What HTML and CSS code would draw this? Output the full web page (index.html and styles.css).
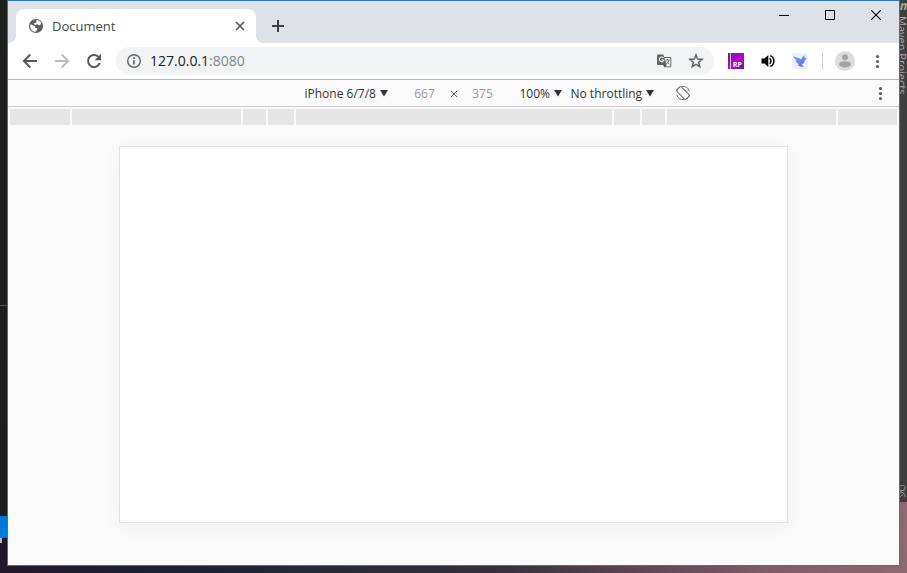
FILE: index.html
```html
<!DOCTYPE html>
<html lang="en">
<head>
<meta charset="utf-8">
<title>Document</title>
<link rel="stylesheet" href="styles.css">
</head>
<body>
<div class="desktop">
  <div class="edge-left"><i class="edge-rule"></i><i class="edge-accent"></i><i class="edge-chip"></i></div>
  <main class="window">
    <header class="tabstrip">
      <div class="tab">
        <svg class="icon16" viewBox="0 0 16 16"><circle cx="8" cy="8" r="7.1" fill="#5b5e62"/><path d="M2.500 6.200 7 8.200v1.500l2 .5.2 1-1.500 2.600C4.400 14 2 11.300 2.100 8zM8.300 1.900c2.200-.1 4.100 1.100 5.100 3.200L12 7.300l-1.800-.2-.8-1.200-2.200 1.300L5.500 5.400l2.900-.9z" fill="#fff"/></svg>
        <span class="tab-title">Document</span>
        <button class="plain tab-close" aria-label="Close tab"><svg width="10" height="10" viewBox="0 0 10 10"><path d="m1 1 8 8M9 1 1 9" stroke="#55585c" stroke-width="1.700"/></svg></button>
      </div>
      <button class="plain new-tab" aria-label="New tab"><svg width="14" height="14" viewBox="0 0 14 14"><path d="M7 1v12M1 7h12" stroke="#3c4043" stroke-width="2"/></svg></button>
      <div class="controls">
        <button class="plain" aria-label="Minimize"><svg width="10" height="10" viewBox="0 0 10 10"><path d="M0 5.500h10" stroke="#000"/></svg></button>
        <button class="plain" aria-label="Maximize"><svg width="10" height="10" viewBox="0 0 10 10"><path d="M.5.5h9v9h-9z" fill="none" stroke="#000"/></svg></button>
        <button class="plain" aria-label="Close"><svg width="10" height="10" viewBox="0 0 10 10"><path d="m0 0 10 10M10 0 0 10" stroke="#000" stroke-width="1.100"/></svg></button>
      </div>
    </header>

    <nav class="toolbar">
      <button class="plain nav" aria-label="Back"><svg class="icon16" viewBox="0 0 16 16"><path d="M15 8H2M8.300 1.500 1.800 8l6.500 6.500" fill="none" stroke="#55585c" stroke-width="1.900"/></svg></button>
      <button class="plain nav" aria-label="Forward"><svg class="icon16" viewBox="0 0 16 16"><path d="M1 8h13M7.700 1.500 14.200 8l-6.500 6.500" fill="none" stroke="#b9bbbe" stroke-width="1.900"/></svg></button>
      <button class="plain nav" aria-label="Reload"><svg class="icon16" viewBox="0 0 16 16"><path d="M13.700 10A6 6 0 1 1 12.300 3.800" fill="none" stroke="#55585c" stroke-width="2"/><path d="M15 .8v6.400H8.600z" fill="#55585c"/></svg></button>
      <div class="omnibox">
        <svg class="icon16" viewBox="0 0 16 16"><circle cx="8" cy="8" r="6.300" fill="none" stroke="#5f6368" stroke-width="1.400"/><path d="M8 7.200v4.300M8 4.200v1.700" stroke="#5f6368" stroke-width="1.700"/></svg>
        <span class="url">127.0.0.1<span class="port">:8080</span></span>
        <button class="plain" aria-label="Translate"><svg class="icon16" viewBox="0 0 16 16"><path d="M6.500 4.500h8.300v9.300H8.500" fill="#f7f7f7" stroke="#686b6f"/><path d="M2 1.500h5.300L10.800 12H2Q1 12 1 11V2.500q0-1 1-1z" fill="#606367"/><path d="M7 12h3.800L8.500 14.200z" fill="#505356"/><path d="M7.500 4.900A2.300 2.300 0 1 0 7.900 7H5.600" fill="none" stroke="#f1f3f4" stroke-width="1.100"/><path d="M9.500 7h4.300M11.600 6v1M13 7q-.5 2.500-2.600 4M10.800 8.300q1 2 2.700 3" fill="none" stroke="#686b6f" stroke-width=".9"/></svg></button>
        <button class="plain" aria-label="Bookmark"><svg class="icon16" viewBox="0 0 16 16"><path d="m8 2 1.700 4.100 4.400.3-3.400 2.900 1.100 4.300L8 11.300l-3.800 2.300 1.100-4.300-3.400-2.900 4.400-.3z" fill="none" stroke="#5f6368" stroke-width="1.500"/></svg></button>
      </div>
      <div class="extensions">
        <button class="plain" aria-label="RP"><svg class="icon16" viewBox="0 0 16 16"><defs><linearGradient id="rp" x2="1" y2="1"><stop stop-color="#6c0f94"/><stop offset=".5" stop-color="#b40bc9"/><stop offset="1" stop-color="#77108f"/></linearGradient></defs><path d="M0 0h2.300v16H0zM3 0h13v16H3z" fill="url(#rp)"/><text x="4.800" y="14" class="rp-text">RP</text></svg></button>
        <button class="plain" aria-label="Volume"><svg class="icon16" viewBox="0 0 16 16"><path d="M1.500 5.600h3L8.300 2v12L4.500 10.400h-3z" fill="#000"/><path d="M9.700 5.200q2.400 2.800 0 5.600M10.300 2.600c4.700 1.700 4.700 9.100 0 10.800" fill="none" stroke="#000" stroke-width="1.500"/></svg></button>
        <button class="plain" aria-label="Bird"><svg class="icon16" viewBox="0 0 16 16"><defs><linearGradient id="bird" x2=".7" y2="1"><stop stop-color="#5ab4fa"/><stop offset="1" stop-color="#7468ee"/></linearGradient></defs><rect width="16" height="16" rx="2" fill="#eef1fd"/><path d="M1 3.200 7.500 5.200l1.300 1.200 3.700-4.600.2 3.200 2.300.3-2.200 1.800c-.2 2.600-1.300 4-3.300 4.400l2.500 2.200c-2.700.4-5.300-.3-6.600-1.700l1.800-.8C5 10.500 3.800 9 3.500 7.600l1.600.1C3.200 6.600 1.700 5 1 3.200z" fill="url(#bird)"/></svg></button>
      </div>
      <i class="divider"></i>
      <button class="plain avatar" aria-label="Profile"><svg width="20" height="20" viewBox="0 0 20 20"><circle cx="10" cy="10" r="10" fill="#dcdcdc"/><circle cx="10" cy="6.200" r="3" fill="#a3a3a3"/><ellipse cx="10" cy="13.300" rx="6" ry="3.100" fill="#a3a3a3"/></svg></button>
      <button class="plain menu" aria-label="Menu"><svg class="icon16" viewBox="0 0 16 16" fill="#5b5e62"><circle cx="8.500" cy="3.500" r="1.600"/><circle cx="8.500" cy="8.500" r="1.600"/><circle cx="8.500" cy="13.500" r="1.600"/></svg></button>
    </nav>

    <section class="devicebar">
      <div class="side side-start"></div>
      <label class="picker"><select aria-label="Device"><option>iPhone 6/7/8</option></select><svg class="caret" viewBox="0 0 8 8"><path d="M0 1h8L4 7.500z"/></svg></label>
      <div class="dimensions">
        <input aria-label="Width" value="667"><svg class="times" viewBox="0 0 8 10"><path d="m.8 2.800 6.400 6.400M7.200 2.800.8 9.200" stroke="#555"/></svg><input aria-label="Height" value="375">
      </div>
      <label class="picker"><select aria-label="Zoom"><option>100%</option></select><svg class="caret" viewBox="0 0 8 8"><path d="M0 1h8L4 7.500z"/></svg></label>
      <label class="picker throttle"><select aria-label="Throttling"><option>No throttling</option></select><svg class="caret" viewBox="0 0 8 8"><path d="M0 1h8L4 7.500z"/></svg></label>
      <button class="plain" aria-label="Rotate"><svg class="icon16" viewBox="0 0 16 16" fill="none" stroke="#6e6e6e"><rect x="4.800" y="1.500" width="6.400" height="13" rx="1" transform="rotate(-45 8 8)"/><path d="M7 1.500q5.500-.8 7.400 5M9 14.500q-5.500.8-7.400-5M1.600 6Q2.200 3.500 4 2.500M14.400 10q-.6 2.500-2.400 3.500"/></svg></button>
      <div class="side side-end"><button class="plain" aria-label="More options"><svg class="icon16" viewBox="0 0 16 16" fill="#5f5f5f"><circle cx="7.500" cy="3.500" r="1.600"/><circle cx="7.500" cy="8.500" r="1.600"/><circle cx="7.500" cy="13.500" r="1.600"/></svg></button></div>
    </section>

    <div class="ruler"><i></i><i class="w-l"></i><i class="w-m"></i><i class="w-s"></i><i class="w-xl"></i><i class="w-s"></i><i class="w-m"></i><i class="w-l"></i><i></i></div>
    <section class="stage"><div class="device"></div></section>
  </main>
  <aside class="edge-right"><div class="side-tools"><b class="maven">m</b><span class="side-label">Maven Projects</span><svg class="side-glyph" width="7" height="14" viewBox="0 0 7 14"><path d="M0 2q5-2 5 2T0 6M0 8l5-3M0 8q5 0 5 5M0 13l4-4" fill="none" stroke="#909090"/></svg></div></aside>
</div>
</body>
</html>
```
FILE: styles.css
```css
* { box-sizing: border-box; }
body {
  margin: 0;
  font-family: "Open Sans", "Noto Sans", sans-serif;
  font-size: 12px;
  color: #333;
}
svg { display: block; flex: none; }
.plain {
  display: flex;
  align-items: center;
  justify-content: center;
  padding: 0;
  border: 0;
  background: none;
}
.icon16 { width: 16px; height: 16px; }

.desktop {
  display: grid;
  grid-template-columns: 7px 1fr 7px;
  height: 100vh;
  padding-bottom: 7px;
  overflow: hidden;
  background: linear-gradient(90deg, #21182a, #1d2230 20%, #35303c 55%, #805c68 85%, #8d6872);
}
.edge-left {
  display: flex;
  flex-direction: column;
  background: linear-gradient(#1f2123, #1e1e1e 91%, #21182a 91%);
}
.edge-rule { height: 1px; margin-top: 305px; background: #555; }
.edge-accent { height: 22px; margin-top: auto; background: #0078d7; }
.edge-chip { width: 2px; height: 5px; margin-bottom: 23px; background: #bbb; }
.edge-right {
  display: flex;
  flex-direction: column;
  overflow: hidden;
  background: linear-gradient(#9b737d, #8d6872);
}
.side-tools {
  display: flex;
  flex-direction: column;
  flex: 1;
  margin-bottom: 64px;
  background: #3f3f3f;
}
.maven { height: 16px; font-size: 12px; line-height: 12px; font-style: italic; color: #aaa; }
.side-label {
  writing-mode: vertical-rl;
  width: 7px;
  font-size: 11px;
  line-height: 9px;
  white-space: nowrap;
  color: #aaa;
}
.side-glyph { margin-top: auto; margin-bottom: 4px; }

.window {
  display: flex;
  flex-direction: column;
  min-width: 0;
  border: 1px solid #2679bd;
  background: #fafafa;
}

.tabstrip {
  display: flex;
  height: 42px;
  padding-left: 8px;
  background: #dee1e8;
}
.tab {
  position: relative;
  display: flex;
  align-items: center;
  width: 240px;
  margin-top: 8px;
  padding: 0 11px 0 12px;
  border-radius: 8px 8px 0 0;
  background: #fff;
}
.tab::before, .tab::after {
  content: "";
  position: absolute;
  bottom: 0;
  width: 8px;
  height: 8px;
}
.tab::before { right: 100%; background: radial-gradient(circle at 0 0, transparent 8px, #fff 8px); }
.tab::after { left: 100%; background: radial-gradient(circle at 100% 0, transparent 8px, #fff 8px); }
.tab-title { flex: 1; margin-left: 8px; font-size: 13px; color: #45484c; }
.new-tab { width: 28px; margin: 8px 0 0 8px; }
.controls { display: flex; height: 28px; margin-left: auto; }
.controls .plain { width: 46px; }

.toolbar {
  display: flex;
  align-items: center;
  height: 37px;
  padding-left: 14px;
  background: #fff;
  border-bottom: 1px solid #b6b6b6;
}
.nav { margin-right: 16px; }
.omnibox {
  display: flex;
  align-items: center;
  flex: 1;
  gap: 16px;
  height: 28px;
  margin-left: -2px;
  padding: 0 10px;
  border-radius: 14px;
  background: #f1f3f4;
}
.url { flex: 1; margin-left: -8px; font-size: 14px; line-height: 18px; color: #202124; }
.port { color: #80868b; }
.extensions { display: flex; gap: 16px; margin-left: 14px; }
.rp-text { font: 700 7px "Open Sans", sans-serif; fill: #fff; }
.divider { width: 1px; height: 16px; margin: 0 12px 0 14px; background: #c8cacd; }
.menu { margin: 0 14px; }

.devicebar {
  display: flex;
  align-items: center;
  height: 27px;
  background: #fbfbfb;
  border-bottom: 1px solid #ccc;
}
.side { flex: 1; display: flex; justify-content: flex-end; }
.side-start { padding-left: 98px; }
.side-end { padding-right: 10px; }
.picker { display: flex; align-items: center; gap: 3px; }
.picker select, .dimensions input {
  appearance: none;
  padding: 0;
  border: 0;
  background: none;
  font: inherit;
  color: #333;
}
.caret { width: 8px; height: 8px; fill: #333; }
.dimensions { display: flex; align-items: center; gap: 5px; margin: 0 17px; }
.dimensions input { width: 40px; text-align: center; color: #9a9a9a; }
.times { width: 8px; height: 10px; }
.throttle { margin: 0 21px 0 9px; }

.ruler { display: flex; gap: 2px; height: 18px; padding: 2px 2px 0; }
.ruler i { flex: 1; background: #e5e5e5; }
.ruler .w-s { flex: 0 0 26px; }
.ruler .w-m { flex: 0 0 23px; }
.ruler .w-l { flex: 0 0 169px; }
.ruler .w-xl { flex: 0 0 316px; }

.stage { display: flex; justify-content: center; padding: 21px 24px 0; }
.device {
  width: 669px;
  aspect-ratio: 669 / 377;
  border: 1px solid #e2e2e2;
  background: #fff;
  box-shadow: 0 4px 20px rgba(0, 0, 0, .04);
}
```
